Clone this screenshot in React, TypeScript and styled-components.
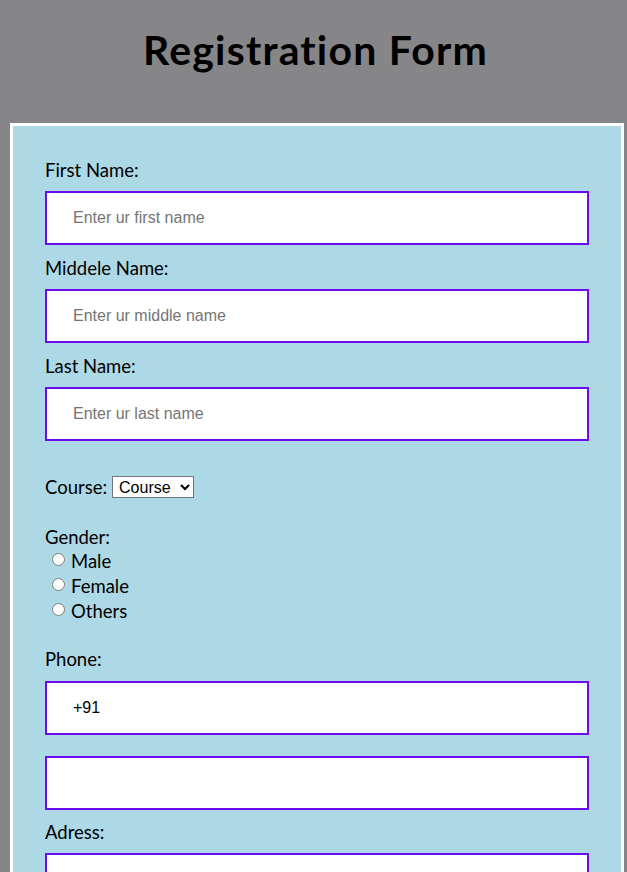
import React from "react";
import styled, { createGlobalStyle } from "styled-components";

const Global = createGlobalStyle`
  html, body { margin: 0; padding: 0; }
  body {
    background: #868688;
    font-family: "Lato", "Noto Sans", sans-serif;
    color: #000;
    overflow: hidden;
  }
`;

const Header = styled.header`
  height: 123px;
  display: flex;
  justify-content: center;
  align-items: flex-start;
`;

const Title = styled.h1`
  margin: 24px 0 0 4px;
  font-size: 41px;
  font-weight: 700;
  line-height: 52px;
  letter-spacing: 1.2px;
`;

const Card = styled.form`
  margin-left: 10px;
  width: 614px;
  box-sizing: border-box;
  border: 3px solid #fff;
  background: #add8e6;
  padding: 26px 32px 40px;
  min-height: 760px;
  display: flex;
  flex-direction: column;
`;

const Label = styled.label<{ $top?: number; $bottom?: number }>`
  display: block;
  font-size: 18.5px;
  line-height: 22px;
  margin-top: ${(p) => p.$top ?? 12}px;
  margin-bottom: ${(p) => p.$bottom ?? 10}px;
`;

const TextInput = styled.input<{ $gap?: number }>`
  display: block;
  box-sizing: border-box;
  width: 100%;
  height: 54px;
  margin: 0;
  margin-bottom: ${(p) => p.$gap ?? 0}px;
  border: 2px solid #6a0cf2;
  background: #fff;
  padding: 0 26px;
  font-family: Arial, "Liberation Sans", sans-serif;
  font-size: 16px;
  color: #000;
  outline: none;
  &::placeholder { color: #757575; }
`;

const CourseRow = styled.div`
  display: flex;
  align-items: center;
  gap: 5px;
  margin-top: 35px;
  font-size: 18.5px;
  line-height: 22px;
`;

const Select = styled.select`
  font-family: Arial, "Liberation Sans", sans-serif;
  font-size: 16px;
  height: 22px;
  width: 82px;
  padding: 0 2px;
  border: 1px solid #767676;
  border-radius: 0;
  background: #fff;
  color: #000;
`;

const GenderBlock = styled.div`
  margin-top: 28px;
  font-size: 18.5px;
  line-height: 25px;
`;

const GenderTitle = styled.div`
  line-height: 23px;
`;

const RadioRow = styled.label`
  display: flex;
  align-items: center;
  height: 25px;
  gap: 6px;
`;

const Radio = styled.input`
  margin: 0 0 4px 7px;
  width: 13px;
  height: 13px;
`;

export default function App() {
  return (
    <>
      <Global />
      <Header>
        <Title>Registration Form</Title>
      </Header>
      <Card onSubmit={(e) => e.preventDefault()}>
        <Label $top={7} $bottom={10}>First Name:</Label>
        <TextInput placeholder="Enter ur first name" />
        <Label>Middele Name:</Label>
        <TextInput placeholder="Enter ur middle name" />
        <Label>Last Name:</Label>
        <TextInput placeholder="Enter ur last name" />
        <CourseRow>
          <span>Course:</span>
          <Select defaultValue="Course">
            <option>Course</option>
          </Select>
        </CourseRow>
        <GenderBlock>
          <GenderTitle>Gender:</GenderTitle>
          <RadioRow>
            <Radio type="radio" name="gender" />
            Male
          </RadioRow>
          <RadioRow>
            <Radio type="radio" name="gender" />
            Female
          </RadioRow>
          <RadioRow>
            <Radio type="radio" name="gender" />
            Others
          </RadioRow>
        </GenderBlock>
        <Label $top={24} $bottom={11}>Phone:</Label>
        <TextInput defaultValue="+91" $gap={21} />
        <TextInput />
        <Label $top={11}>Adress:</Label>
        <TextInput />
      </Card>
    </>
  );
}
